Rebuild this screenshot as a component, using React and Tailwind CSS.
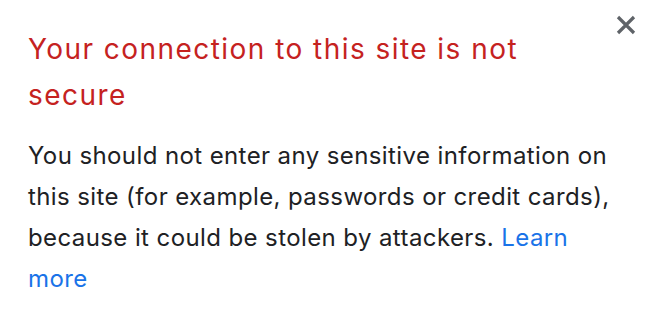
export default function App() {
  return (
    <div className="w-[658px] h-[325px] bg-white relative font-['Inter','Liberation_Sans',sans-serif]">
      {/* close button */}
      <button className="absolute top-[13px] right-[20px] text-[#5f6368]" type="button" aria-label="Close">
        <svg width="24" height="24" viewBox="0 0 24 24">
          <path d="M4 4 L20 20 M20 4 L4 20" stroke="currentColor" strokeWidth="3.2" />
        </svg>
      </button>

      <div className="pl-[28px] pt-[26px]">
        <h1 className="text-[28px] leading-[46px] tracking-[1.45px] text-[#c5221f] font-normal w-[540px]">
          Your connection to this site is not secure
        </h1>
        <p className="mt-[17px] text-[24px] leading-[41px] tracking-[0.4px] text-[#202124] w-[596px]">
          You should not enter any sensitive information on this site (for example, passwords or credit cards), because it could be stolen by attackers.{" "}
          <a href="#" className="text-[#1a73e8]">Learn more</a>
        </p>
      </div>
    </div>
  );
}
